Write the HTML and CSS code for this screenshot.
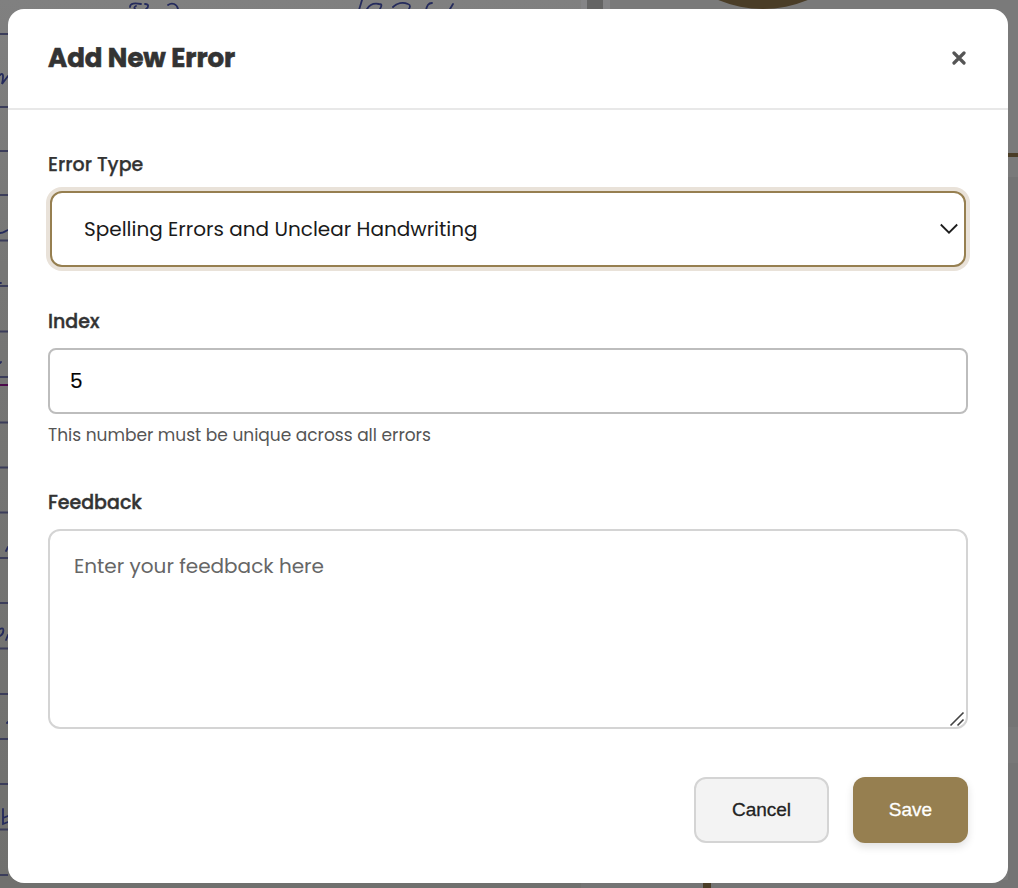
FILE: index.html
```html
<!DOCTYPE html>
<html lang="en">
<head>
<meta charset="utf-8">
<title>Add New Error</title>
<link rel="stylesheet" href="styles.css">
</head>
<body>
<svg class="backdrop" width="1018" height="888" viewBox="0 0 1018 888" fill="none" aria-hidden="true">
  <defs>
    <linearGradient id="paper" x1="0" y1="0" x2="0" y2="1"><stop offset="0" stop-color="#808080"/><stop offset=".3" stop-color="#767675"/><stop offset="1" stop-color="#70706e"/></linearGradient>
  </defs>
  <rect width="581" height="888" fill="url(#paper)"/>
  <rect x="581" width="437" height="888" fill="#7a7a7a"/>
  <rect x="581" y="880" width="427" height="8" fill="#747474"/>
  <rect x="581" width="29" height="12" fill="#848486"/>
  <rect x="587" width="16" height="12" fill="#646464"/>
  <rect x="1008" y="177" width="10" height="711" fill="#747474"/>
  <rect x="1008" y="727" width="10" height="36" fill="#787878"/>
  <circle cx="763" cy="-108" r="117" fill="#4a3d27"/>
  <path d="M1008 155h10" stroke="#4a3d27" stroke-width="4"/>
  <path d="M707 883v5" stroke="#4a3d27" stroke-width="8"/>
  <path d="M0 34h8M0 107h8M0 151h8M0 195h8M0 240.500h8M0 286h8M0 331.500h8M0 377h8M0 422.500h8M0 467.500h8M0 512.500h8M0 558h8M0 603h8M0 648.500h8M0 694h8M0 739h8M0 784h8M0 829.500h8M0 875h8" stroke="#3b3d5a" stroke-width="2"/>
  <path d="M0 385h8" stroke="#4b0a4b" stroke-width="2"/>
  <g stroke="#252b5c" stroke-width="1.800" stroke-linecap="round">
    <path d="M130 7c0-4 5-4 11-3M136 6c-2 1-2 2-1 3M145 4c4 0 4 3 1 5M168 5c4-3 9-1 10 4"/>
    <path d="M362 0l-3 10M367 9c3-5 7-6 12-5c4 0 2 3 1 5M393 7c4-4 10-5 15-3c3 1 2 3 1 5M432 3c-4 0-5 3-6 7M453 4l-3 5"/>
    <path d="M0 75c3-3 4 0 2 9l6-8M0 233c4 0 5-2 8-3M0 283h1M0 363l1-1M6 551l2-4M0 629c5-3 4 5 0 7M6 640l2-5M7 723l1-1M3 809v15l5-2M3 818l5-2"/>
  </g>
</svg>
<main class="modal">
  <header class="modal-header">
    <h1 class="title">Add New Error</h1>
    <button class="close" aria-label="Close"><svg width="14" height="14" viewBox="0 0 14 14"><path d="M2 2l10 10M12 2L2 12"/></svg></button>
  </header>
  <form class="form">
    <label class="label label-type" for="type">Error Type</label>
    <div class="select-wrap">
      <select class="select" id="type"><option>Spelling Errors and Unclear Handwriting</option></select>
      <svg class="chevron" width="18" height="12" viewBox="0 0 18 12"><path d="M.800 1.500L9 9.700l8.200-8.200"/></svg>
    </div>
    <label class="label label-index" for="index">Index</label>
    <input class="input" id="index" value="5">
    <p class="hint">This number must be unique across all errors</p>
    <label class="label label-feedback" for="feedback">Feedback</label>
    <div class="textarea-wrap">
      <textarea class="textarea" id="feedback" placeholder="Enter your feedback here"></textarea>
      <svg class="grip" width="16" height="16" viewBox="0 0 16 16"><path d="M1.500 14.500l13-13M8.500 14.500l6-6"/></svg>
    </div>
    <div class="actions">
      <button class="button cancel" type="button">Cancel</button>
      <button class="button save" type="button">Save</button>
    </div>
  </form>
</main>
</body>
</html>
```
FILE: styles.css
```css
* { box-sizing: border-box; }
body { margin: 0; width: 1018px; height: 888px; overflow: hidden; background: #777; font-family: Poppins, Inter, "Open Sans", sans-serif; padding: 9px 10px 5px 8px; }
.backdrop { position: absolute; inset: 0; }
.modal { position: relative; height: 874px; border-radius: 16px; background: #fff; }
.modal-header { display: flex; align-items: center; justify-content: space-between; height: 101px; padding: 0 40px 1px; border-bottom: 2px solid #e8e8e8; }
.title { margin: 0; font-size: 26px; line-height: 36px; font-weight: 700; letter-spacing: -.03px; color: #333; -webkit-text-stroke: .6px #333; }
.close { display: flex; padding: 0; margin: 0 2px 0 0; border: 0; background: none; }
.close path { fill: none; stroke: #555; stroke-width: 3.200; stroke-linecap: round; }
.form { display: flex; flex-direction: column; padding: 40px; }
.label { font-size: 19px; line-height: 29px; font-weight: 500; color: #333; -webkit-text-stroke: .25px #333; }
.select-wrap { position: relative; margin: 12px 2px 0; height: 76px; }
.select { appearance: none; display: block; width: 100%; height: 76px; padding: 0 32px; border: 2px solid #967f50; border-radius: 12px; outline: 0; box-shadow: 0 0 0 4px #e9e2d9; background: #fff; color: #1a1a1a; font-family: inherit; font-size: 20px; }
.chevron { position: absolute; right: 8px; top: 32px; }
.chevron path { fill: none; stroke: #1d1d1d; stroke-width: 1.800; }
.label-index { margin-top: 40px; }
.input { height: 66px; margin-top: 12px; padding: 0 20px; border: 2px solid #bdbdbd; border-radius: 8px; outline: 0; background: #fff; color: #000; font-family: inherit; font-size: 20px; -webkit-text-stroke: .2px #000; }
.hint { margin: 8px 0 0; font-size: 17px; line-height: 26px; color: #555; }
.label-feedback { margin-top: 40px; }
.label-index, .label-feedback { -webkit-text-stroke-width: .4px; }
.textarea-wrap { position: relative; height: 200px; margin-top: 12px; }
.textarea { display: block; width: 100%; height: 200px; resize: none; padding: 20px 24px; border: 2px solid #d4d4d4; border-radius: 12px; background: #fff; font-family: inherit; font-size: 20px; line-height: 30px; }
.textarea::placeholder { color: #666; opacity: 1; }
.grip { position: absolute; right: 3px; bottom: 2px; }
.grip path { fill: none; stroke: #444; stroke-width: 1.600; }
.actions { display: flex; justify-content: flex-end; gap: 24px; margin-top: 48px; }
.button { height: 66px; padding: 0; border-radius: 12px; font-family: "Liberation Sans", sans-serif; font-size: 19px; line-height: 24px; -webkit-text-stroke: .3px currentColor; }
.cancel { width: 135px; border: 2px solid #d4d4d4; background: #f3f3f3; color: #222; }
.save { width: 115px; border: 0; background: #967f50; color: #fff; box-shadow: 0 4px 8px rgba(0,0,0,.12); }
```
